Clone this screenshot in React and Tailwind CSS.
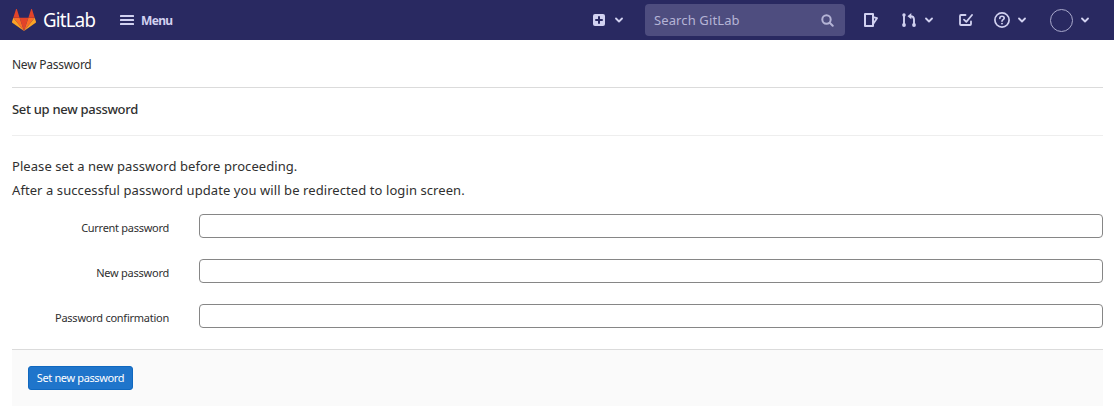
function Logo() {
  return (
    <svg width="24" height="24" viewBox="0 0 24 24" className="relative top-px shrink-0">
      <path d="M12 22 16.4 8.7H7.6z" fill="#e24329" />
      <path d="M12 22 7.6 8.7H1.3z" fill="#fc6d26" />
      <path d="M1.3 8.7 0 12.7c-.1.4 0 .8.3 1L12 22z" fill="#fca326" />
      <path d="M1.3 8.7h6.3L4.9.3c-.1-.4-.7-.4-.9 0z" fill="#e24329" />
      <path d="M12 22 16.4 8.7h6.3z" fill="#fc6d26" />
      <path d="m22.7 8.7 1.3 4c.1.4 0 .8-.3 1L12 22z" fill="#fca326" />
      <path d="M22.7 8.7h-6.3L19.1.3c.1-.4.7-.4.9 0z" fill="#e24329" />
    </svg>
  );
}

function Chevron({ className }) {
  return (
    <svg width="8" height="6" viewBox="0 0 8 6" className={className} fill="none" stroke="currentColor" strokeWidth="1.8" strokeLinecap="round" strokeLinejoin="round">
      <path d="M1 1.5 4 4.5 7 1.5" />
    </svg>
  );
}

function Header() {
  return (
    <header className="flex h-10 items-center bg-[#292961] pl-3 text-[#d1d1f0]">
      <Logo />
      <span className="ml-[7px] w-[53px] origin-left scale-x-[.93] whitespace-nowrap text-[20px] leading-10 tracking-[-0.8px] text-white">GitLab</span>
      <svg width="14" height="10" viewBox="0 0 14 10" className="ml-6 shrink-0" fill="currentColor">
        <rect width="14" height="2" rx=".5" />
        <rect y="4" width="14" height="2" rx=".5" />
        <rect y="8" width="14" height="2" rx=".5" />
      </svg>
      <span className="ml-[7px] pt-[2px] text-[12px] font-bold tracking-[-0.65px]">Menu</span>
      <div className="ml-auto flex items-center">
        <svg width="12" height="12" viewBox="0 0 12 12">
          <rect width="12" height="12" rx="2" fill="currentColor" />
          <path d="M6 3v6M3 6h6" stroke="#292961" strokeWidth="2" strokeLinecap="round" />
        </svg>
        <Chevron className="ml-[10px]" />
        <div className="ml-[22px] flex h-8 w-[200px] items-center justify-between rounded bg-[#4e4d7f] pr-[11px] pl-[9px] text-[#b5b4d6]">
          <span className="pt-[2px] text-[13px] tracking-[0.12px]">Search GitLab</span>
          <svg width="13" height="13" viewBox="0 0 13 13" fill="none" stroke="currentColor" strokeWidth="2">
            <circle cx="5.5" cy="5.5" r="4.2" />
            <path d="m8.7 8.7 3 3" strokeLinecap="round" />
          </svg>
        </div>
        <svg width="14" height="14" viewBox="0 0 14 14" className="ml-[19px]" fill="none" stroke="currentColor" strokeLinejoin="round">
          <path d="M1 1h8v12H1z" strokeWidth="2" />
          <path d="M9.3 4.2 13 5.2 9.3 10.8" strokeWidth="1.8" />
        </svg>
        <svg width="14" height="14" viewBox="0 0 14 14" className="ml-6" fill="none" stroke="currentColor" strokeWidth="1.9">
          <path d="M2 2v10M12 12V6.5Q12 3.2 8.5 3.2" />
          <path d="M9.3.1v6.200L5.5 3.2z" fill="currentColor" stroke="none" />
          <circle cx="2" cy="2" r="1.7" fill="currentColor" stroke="none" />
          <circle cx="2" cy="12" r="1.9" fill="currentColor" stroke="none" />
          <circle cx="12" cy="12" r="1.9" fill="currentColor" stroke="none" />
        </svg>
        <Chevron className="ml-[9px]" />
        <svg width="14" height="14" viewBox="0 0 14 14" className="ml-[26px]" fill="none" stroke="currentColor" strokeWidth="1.8" strokeLinecap="round" strokeLinejoin="round">
          <path d="M6.5 2H2q-1 0-1 1v8q0 1 1 1h9q1 0 1-1V8.5" />
          <path d="m5 6.6 2.3 2.2L13 2" />
        </svg>
        <svg width="16" height="16" viewBox="0 0 16 16" className="ml-[21px]" fill="none" stroke="currentColor" strokeLinecap="round">
          <circle cx="8" cy="8" r="7.1" strokeWidth="1.7" />
          <path d="M5.8 6.4C5.8 4.9 6.8 4.2 8 4.2s2.2.8 2.2 2C10.2 7.6 8 7.6 8 9.2" strokeWidth="1.6" />
          <circle cx="8" cy="11.6" r=".95" fill="currentColor" stroke="none" />
        </svg>
        <Chevron className="ml-2" />
        <span className="ml-6 size-[23px] rounded-full border border-[#a9a9cc]" />
        <Chevron className="mr-[25px] ml-2" />
      </div>
    </header>
  );
}

function Field({ label, tracking }) {
  return (
    <label className="flex h-6">
      <span className={`mr-[30px] w-[157px] pt-[2px] text-right text-[11px] leading-6 whitespace-nowrap ${tracking}`}>{label}</span>
      <input type="password" className="h-6 min-w-0 flex-1 rounded border border-[#868686] bg-white px-2 outline-none" />
    </label>
  );
}

export default function App() {
  return (
    <div className="flex h-[406px] flex-col overflow-hidden bg-white font-['Noto_Sans','Open_Sans',sans-serif] text-[#303030]">
      <Header />
      <main className="mr-[11px] ml-3 flex flex-1 flex-col">
        <div className="h-12 border-b border-[#dbdbdb] text-[12px] leading-[50px]">
          <span className="tracking-[-0.25px]">New Password</span>
        </div>
        <h1 className="h-12 border-b border-[#eeeeee] text-[13px] leading-[43px] font-medium">
          <span className="tracking-[-0.3px]">Set up new password</span>
        </h1>
        <div className="pt-[18px] text-[13px] leading-6">
          <p className="tracking-[0.07px]">Please set a new password before proceeding.</p>
          <p className="tracking-[0.08px]">After a successful password update you will be redirected to login screen.</p>
        </div>
        <form className="flex flex-1 flex-col">
          <div className="mt-3 flex flex-col gap-[21px]">
            <Field label="Current password" tracking="tracking-[-0.28px]" />
            <Field label="New password" tracking="tracking-[-0.24px]" />
            <Field label="Password confirmation" tracking="tracking-[-0.25px]" />
          </div>
          <div className="mt-[21px] flex-1 border-t border-[#dbdbdb] bg-[#fafafa] px-4 pt-4">
            <button type="button" className="flex h-6 w-[105px] items-center justify-center rounded-[3px] border border-[#1068bf] bg-[#1f75cb] text-[11px] whitespace-nowrap text-white">
              <span className="tracking-[-0.36px]">Set new password</span>
            </button>
          </div>
        </form>
      </main>
    </div>
  );
}
